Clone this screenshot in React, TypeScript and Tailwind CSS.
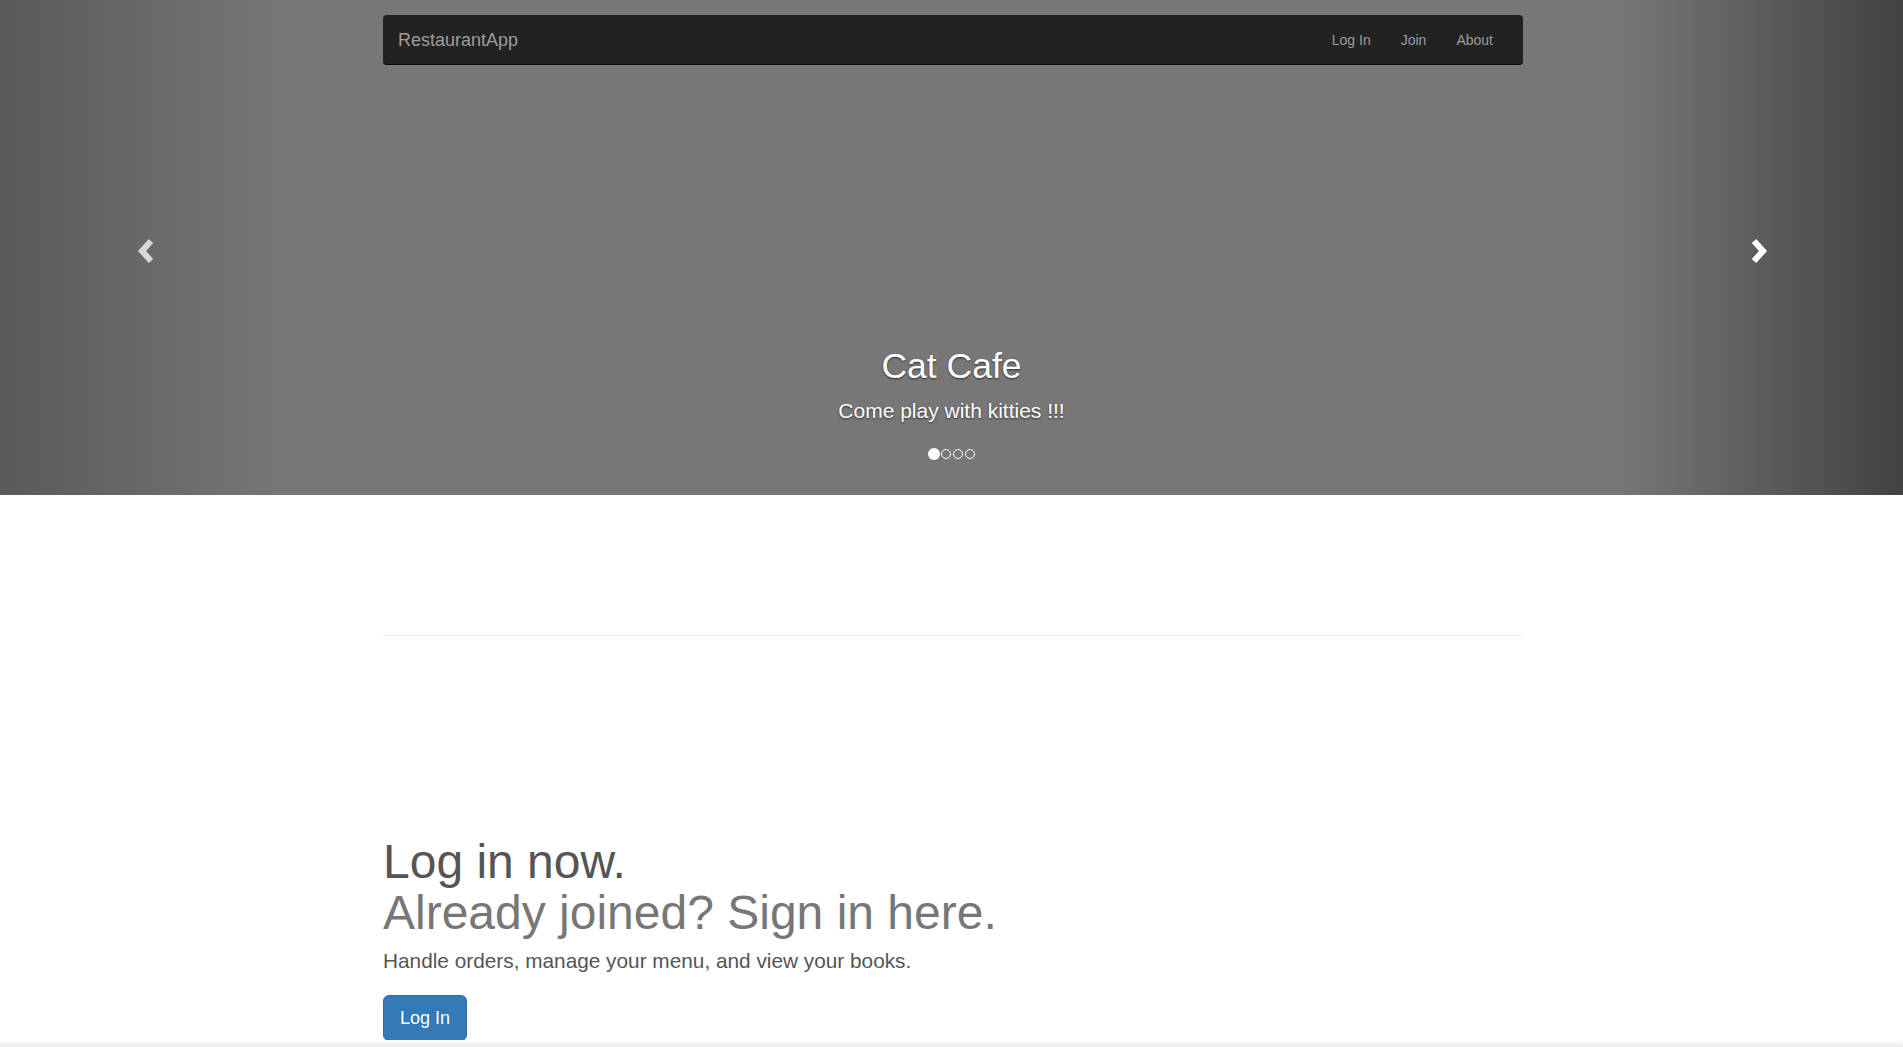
import React from "react";

const arial = "font-['Liberation_Sans',Arial,sans-serif]";

const slides = ["Cat Cafe", "Dog Diner", "Bird Bistro", "Fish Grill"];

function Chevron({ dir }: { dir: "left" | "right" }) {
  return (
    <svg width="20" height="30" viewBox="0 0 20 30" aria-hidden="true">
      <polyline
        points={dir === "left" ? "15,4 6,14 15,24" : "5,4 14,14 5,24"}
        fill="none"
        stroke="currentColor"
        strokeWidth="6"
        strokeLinejoin="miter"
      />
    </svg>
  );
}

function Navbar() {
  return (
    <div className="absolute inset-x-0 top-[15px] z-10">
      <div className="mx-auto w-[1143px] pl-[3px]">
        <nav className={`flex h-[50px] items-center justify-between rounded-[4px] border-b border-[#080808] bg-[#222] ${arial}`}>
          <a className="pl-[15px] pt-[1px] text-[18px] text-[#9d9d9d]">RestaurantApp</a>
          <ul className="flex pr-[15px] text-[14px] text-[#9d9d9d]">
            {["Log In", "Join", "About"].map((l) => (
              <li key={l}>
                <a className="block px-[15px] leading-[50px]">{l}</a>
              </li>
            ))}
          </ul>
        </nav>
      </div>
    </div>
  );
}

function Carousel() {
  return (
    <div className={`relative h-[495px] w-full bg-[#777] text-white ${arial}`}>
      <div className="absolute inset-y-0 left-0 flex w-[15%] items-center justify-center bg-linear-to-r from-black/25 to-transparent text-white/75">
        <span className="mt-[8px] ml-[6px]">
          <Chevron dir="left" />
        </span>
      </div>
      <div className="absolute inset-y-0 right-0 flex w-[15%] items-center justify-center bg-linear-to-l from-black/45 to-transparent text-white">
        <span className="mt-[8px] mr-[2px]">
          <Chevron dir="right" />
        </span>
      </div>
      <div className="absolute inset-x-0 top-[344px] flex flex-col items-center [text-shadow:0_1px_2px_rgba(0,0,0,0.6)]">
        <h3 className="text-[35.5px] leading-[44px]">{slides[0]}</h3>
        <p className="mt-[9px] text-[21px] leading-[28px]">Come play with kitties !!!</p>
        <ol className="mt-[23px] flex items-center">
          {slides.map((s, i) =>
            i === 0 ? (
              <li key={s} className="h-[12px] w-[12px] rounded-full bg-white" />
            ) : (
              <li key={s} className="m-[1px] h-[10px] w-[10px] rounded-full border border-white" />
            )
          )}
        </ol>
      </div>
    </div>
  );
}

export default function App() {
  return (
    <div className="relative h-[1047px] overflow-hidden bg-white">
      <Navbar />
      <Carousel />
      <main className={`mx-auto w-[1143px] pl-[3px] ${arial}`}>
        <hr className="mt-[140px] border-0 border-t border-[#eee]" />
        <div className="mt-[200px]">
          <h2 className="text-[48px] leading-[51px] text-[#555]">
            Log in now.
            <br />
            <span className="text-[#777]">Already joined? Sign in here.</span>
          </h2>
          <p className="mt-[9px] text-[20.8px] leading-[28px] text-[#555]">
            Handle orders, manage your menu, and view your books.
          </p>
          <a className="mt-[20px] inline-flex h-[46px] items-center rounded-[6px] border border-[#2e6da4] bg-[#337ab7] px-[16px] text-[18px] text-white">
            Log In
          </a>
        </div>
      </main>
      <div className="fixed inset-x-0 bottom-0 h-[7px] bg-linear-to-b from-white to-[#ececec]" />
    </div>
  );
}
